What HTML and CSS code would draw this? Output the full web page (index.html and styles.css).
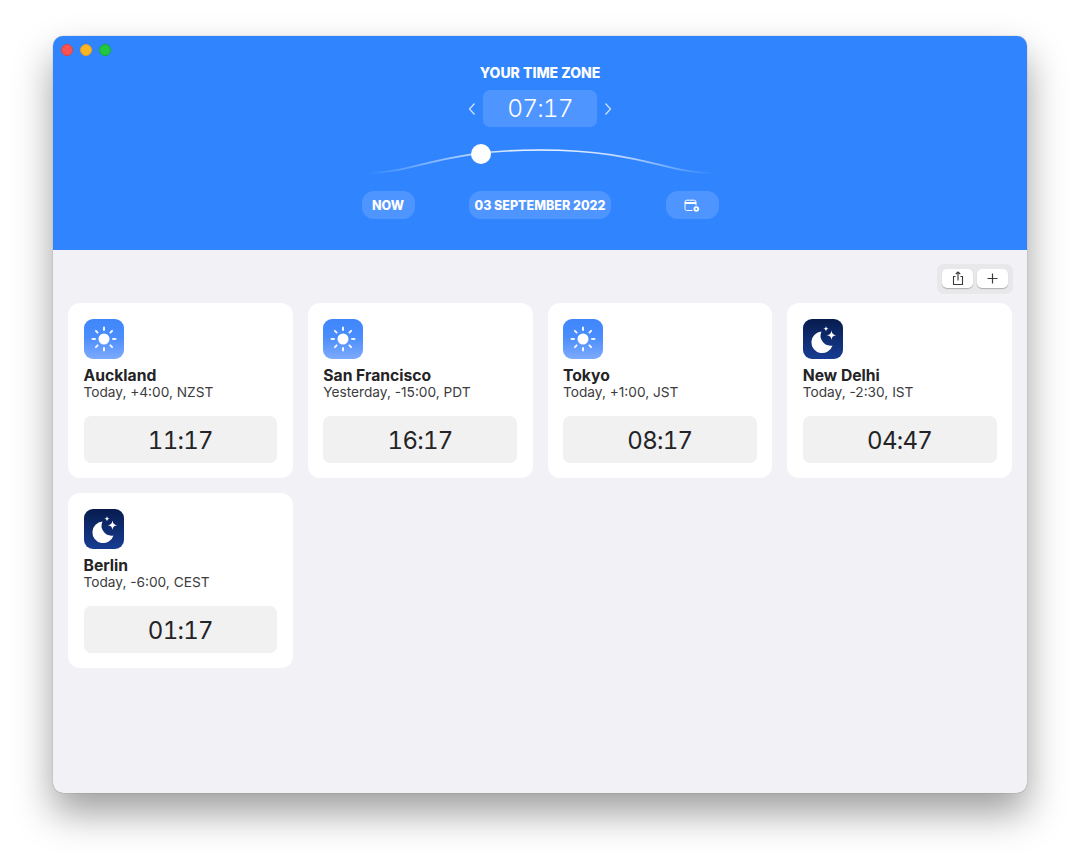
FILE: index.html
```html
<!DOCTYPE html>
<html lang="en">
<head>
    <meta charset="UTF-8">
    <title>Time Zones</title>
    <link rel="stylesheet" href="styles.css">
</head>
<body>
    <div class="window">
        <header class="header">
            <div class="traffic-lights">
                <span class="light light-red"></span>
                <span class="light light-yellow"></span>
                <span class="light light-green"></span>
            </div>
            <h1 class="zone-title">YOUR TIME ZONE</h1>
            <div class="time-row">
                <svg class="chevron" width="8" height="14" viewBox="0 0 8 14"><path d="M6.5 1.5 1.5 7l5 5.500"/></svg>
                <div class="time-box">07:17</div>
                <svg class="chevron" width="8" height="14" viewBox="0 0 8 14"><path d="M1.500 1.500 6.500 7l-5 5.500"/></svg>
            </div>
            <div class="slider">
                <svg class="slider-curve" width="350" height="30" viewBox="0 0 350 30">
                    <defs>
                        <linearGradient id="curveFade" x1="0" x2="1" y1="0" y2="0">
                            <stop offset="0" stop-color="#fff" stop-opacity="0"/>
                            <stop offset="0.3" stop-color="#fff" stop-opacity="0.65"/>
                            <stop offset="0.5" stop-color="#fff" stop-opacity="0.95"/>
                            <stop offset="0.75" stop-color="#fff" stop-opacity="0.65"/>
                            <stop offset="1" stop-color="#fff" stop-opacity="0"/>
                        </linearGradient>
                    </defs>
                    <path d="M2 27C50 27 75 4 175 4S300 27 348 27" fill="none" stroke="url(#curveFade)" stroke-width="1.700"/>
                </svg>
                <span class="slider-knob"></span>
            </div>
            <div class="controls">
                <div class="pill pill-now">NOW</div>
                <div class="pill pill-date">03 SEPTEMBER 2022</div>
                <div class="pill pill-now">
                    <svg width="16" height="14" viewBox="0 0 16 14" fill="none" stroke="#fff" stroke-width="1">
                        <path d="M8.500 11.500H2.800A1.800 1.800 0 0 1 1 9.700V3a1.800 1.800 0 0 1 1.800-1.800h7.400A1.800 1.800 0 0 1 12 3v3.500"/>
                        <path d="M1 4h11" stroke-width="1.800"/>
                        <circle cx="12.300" cy="10" r="2.800" fill="#fff" stroke="none"/>
                        <circle cx="12.300" cy="10" r="1" fill="#4f94ff" stroke="none"/>
                    </svg>
                </div>
            </div>
        </header>

        <main class="content">
            <div class="toolbar">
                <div class="tool-group">
                    <button class="tool-btn">
                        <svg width="12" height="15" viewBox="0 0 12 15" fill="none" stroke="#3a3a3c" stroke-width="1.100">
                            <path d="M3.500 5.500H1.500v8h9v-8h-2"/>
                            <path d="M6 9.500V1M3.800 3 6 .900 8.200 3"/>
                        </svg>
                    </button>
                    <button class="tool-btn">
                        <svg width="11" height="11" viewBox="0 0 11 11" fill="none" stroke="#3a3a3c" stroke-width="1.200">
                            <path d="M5.500 .500v10M.500 5.500h10"/>
                        </svg>
                    </button>
                </div>
            </div>

            <div class="cards">
                <div class="card">
                    <svg class="zone-icon" viewBox="0 0 40 40"><use href="#iconDay"/></svg>
                    <div class="city">Auckland</div>
                    <div class="offset">Today, +4:00, NZST</div>
                    <div class="city-time">11:17</div>
                </div>
                <div class="card">
                    <svg class="zone-icon" viewBox="0 0 40 40"><use href="#iconDay"/></svg>
                    <div class="city">San Francisco</div>
                    <div class="offset">Yesterday, -15:00, PDT</div>
                    <div class="city-time">16:17</div>
                </div>
                <div class="card">
                    <svg class="zone-icon" viewBox="0 0 40 40"><use href="#iconDay"/></svg>
                    <div class="city">Tokyo</div>
                    <div class="offset">Today, +1:00, JST</div>
                    <div class="city-time">08:17</div>
                </div>
                <div class="card">
                    <svg class="zone-icon" viewBox="0 0 40 40"><use href="#iconNight"/></svg>
                    <div class="city">New Delhi</div>
                    <div class="offset">Today, -2:30, IST</div>
                    <div class="city-time">04:47</div>
                </div>
                <div class="card">
                    <svg class="zone-icon" viewBox="0 0 40 40"><use href="#iconNight"/></svg>
                    <div class="city">Berlin</div>
                    <div class="offset">Today, -6:00, CEST</div>
                    <div class="city-time">01:17</div>
                </div>
            </div>
        </main>
    </div>

    <!-- shared icons -->
    <svg class="icon-defs" width="0" height="0">
        <defs>
            <linearGradient id="dayBg" x1="0" x2="0" y1="0" y2="1">
                <stop offset="0" stop-color="#3f86fb"/>
                <stop offset="0.45" stop-color="#4a8dfd"/>
                <stop offset="1" stop-color="#7eaafc"/>
            </linearGradient>
            <linearGradient id="nightBg" x1="0" x2="0" y1="0" y2="1">
                <stop offset="0" stop-color="#071c4e"/>
                <stop offset="1" stop-color="#173d93"/>
            </linearGradient>
            <symbol id="iconDay" viewBox="0 0 40 40">
                <rect width="40" height="40" rx="9" fill="url(#dayBg)"/>
                <circle cx="20" cy="20" r="5.500" fill="#fff"/>
                <g stroke="#fff" stroke-width="2" stroke-linecap="round" opacity="0.92">
                    <path d="M20 8.500v2.500M20 29v2.500M8.500 20H11M29 20h2.500M11.900 11.900l1.700 1.700M26.400 26.400l1.700 1.700M11.900 28.100l1.700-1.700M26.400 13.600l1.700-1.700"/>
                </g>
            </symbol>
            <symbol id="iconNight" viewBox="0 0 40 40">
                <rect width="40" height="40" rx="9" fill="url(#nightBg)"/>
                <path d="M18.500 12.500A10.800 10.800 0 1 0 29.500 26.500a10 10 0 0 1-11-14z" fill="#fff"/>
                <path d="M28.500 11.500c.6 3.300 1.400 4.100 4.700 4.700-3.300.6-4.100 1.400-4.700 4.700-.6-3.300-1.400-4.100-4.700-4.700 3.300-.6 4.100-1.400 4.700-4.700z" fill="#fff"/>
                <path d="M23 7c.4 2 .8 2.400 2.800 2.800-2 .4-2.400.8-2.800 2.800-.4-2-.8-2.400-2.800-2.800 2-.4 2.400-.8 2.800-2.800z" fill="#fff"/>
            </symbol>
        </defs>
    </svg>
</body>
</html>
```

FILE: styles.css
```css
:root {
    --blue: #3085ff;
    --blue-light: #4f95ff;
    --bg-color: #f1f1f6;
    --text-dark: #242426;
    --text-mid: #3c3c3e;
}

* {
    box-sizing: border-box;
    margin: 0;
    padding: 0;
}

html, body {
    height: 863px;
    overflow: hidden;
}

body {
    font-family: Inter, "Liberation Sans", sans-serif;
    background-color: #fff;
    padding: 36px 53px 70px;
}

.window {
    width: 974px;
    height: 757px;
    border-radius: 10px;
    overflow: hidden;
    background-color: var(--bg-color);
    box-shadow: 0 0 1px rgba(0, 0, 0, 0.5), 0 20px 38px rgba(0, 0, 0, 0.38);
    display: flex;
    flex-direction: column;
}

.header {
    position: relative;
    height: 214px;
    background-color: var(--blue);
    display: flex;
    flex-direction: column;
    align-items: center;
    padding-top: 29px;
    color: #fff;
}

.traffic-lights {
    position: absolute;
    top: 7.500px;
    left: 7.700px;
    display: flex;
    gap: 7px;
}

.light {
    width: 12px;
    height: 12px;
    border-radius: 50%;
}

.light-red { background-color: #fc5350; border: 1px solid #e0443e; }
.light-yellow { background-color: #fdb524; border: 1px solid #e09f1f; }
.light-green { background-color: #1fc840; border: 1px solid #1aac2c; }

.zone-title {
    font-size: 14px;
    line-height: 16px;
    font-weight: 800;
}

.time-row {
    display: flex;
    align-items: center;
    gap: 7px;
    margin-top: 9px;
}

.chevron {
    fill: none;
    stroke: rgba(255, 255, 255, 0.75);
    stroke-width: 1.300;
}

.time-box {
    width: 114px;
    height: 37px;
    border-radius: 7px;
    background-color: var(--blue-light);
    text-align: center;
    font-size: 24.500px;
    line-height: 37px;
    font-weight: 300;
    font-variant-numeric: tabular-nums;
    letter-spacing: -0.9px;
}

.slider {
    position: relative;
    width: 350px;
    height: 30px;
    margin-top: 19px;
}

.slider-curve {
    display: block;
}

.slider-knob {
    position: absolute;
    left: 106px;
    top: -2.500px;
    width: 20px;
    height: 20px;
    border-radius: 50%;
    background-color: #fff;
}

.controls {
    display: flex;
    justify-content: space-between;
    width: 357px;
    margin-top: 15px;
}

.pill {
    height: 28px;
    padding-top: 1px;
    border-radius: 12px;
    background-color: var(--blue-light);
    display: flex;
    align-items: center;
    justify-content: center;
    font-size: 12.500px;
    font-weight: 800;
}

.pill-now { width: 53px; }
.pill-date { width: 142px; }

.content {
    flex: 1;
    padding: 14px 15px;
}

.toolbar {
    display: flex;
    justify-content: flex-end;
    margin-right: -1px;
}

.tool-group {
    display: flex;
    gap: 4px;
    width: 76px;
    height: 30px;
    padding: 5px 5px;
    border-radius: 7px;
    background-color: #e8e8ea;
}

.tool-btn {
    flex: 1;
    height: 19px;
    border: none;
    border-radius: 5px;
    background-color: #fff;
    box-shadow: 0 1px 1px rgba(0, 0, 0, 0.25);
    display: flex;
    align-items: center;
    justify-content: center;
}

.cards {
    display: grid;
    grid-template-columns: repeat(4, 224.750px);
    gap: 15px;
    margin-top: 9px;
}

.card {
    height: 175px;
    padding: 15.500px 15.500px;
    border-radius: 12px;
    background-color: #fff;
}

.zone-icon {
    display: block;
    width: 40px;
    height: 40px;
}

.city {
    margin-top: 7.500px;
    font-size: 15.700px;
    line-height: 19px;
    font-weight: 700;
    color: var(--text-dark);
}

.offset {
    font-size: 13.700px;
    line-height: 15px;
    color: var(--text-mid);
}

.city-time {
    margin-top: 15.500px;
    height: 47px;
    border-radius: 7px;
    background-color: #f1f1f2;
    text-align: center;
    font-size: 24px;
    line-height: 49px;
    font-weight: 400;
    font-variant-numeric: tabular-nums;
    letter-spacing: -0.7px;
    color: var(--text-dark);
}

.icon-defs {
    position: absolute;
}
```
